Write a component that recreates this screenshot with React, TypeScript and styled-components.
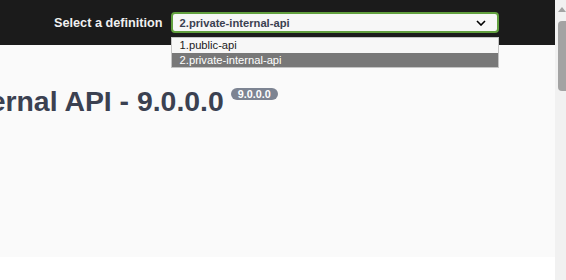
import React, { useState } from 'react';
import styled, { createGlobalStyle } from 'styled-components';

const GlobalStyle = createGlobalStyle`
  html, body {
    margin: 0;
    padding: 0;
    background: #ffffff;
    font-family: 'Liberation Sans', Arial, sans-serif;
    overflow: hidden;
  }
`;

const Frame = styled.div`
  display: flex;
  height: 280px;
  width: 566px;
`;

const Main = styled.div`
  flex: 1;
  display: flex;
  flex-direction: column;
  overflow: hidden;
  min-width: 0;
`;

const Topbar = styled.header`
  height: 45px;
  flex-shrink: 0;
  background: #1b1b1b;
  display: flex;
  align-items: center;
  padding-left: 54px;
  gap: 8px;
`;

const SelectLabel = styled.span`
  color: #f0f0f0;
  font-size: 12.7px;
  font-weight: 700;
  white-space: nowrap;
`;

const SelectWrap = styled.div`
  position: relative;
  width: 328px;
`;

const SelectBox = styled.div`
  box-sizing: border-box;
  height: 21px;
  border: 2px solid #62a03f;
  border-radius: 4px;
  background: #f7f7f7;
  display: flex;
  align-items: center;
  justify-content: space-between;
  padding: 0 11px 0 7px;
  font-size: 11.2px;
  font-weight: 700;
  color: #3b4151;
  cursor: pointer;
`;

const Options = styled.ul`
  position: absolute;
  top: 25px;
  left: 0;
  width: 328px;
  box-sizing: border-box;
  margin: 0;
  padding: 0;
  list-style: none;
  background: #f7f7f7;
  border: 1px solid #c4c4c4;
  z-index: 2;
`;

const Option = styled.li<{ $active?: boolean }>`
  height: 14.5px;
  line-height: 14px;
  padding-left: 8px;
  font-size: 11.2px;
  color: ${(p) => (p.$active ? '#ffffff' : '#1b1b1b')};
  background: ${(p) => (p.$active ? '#787878' : 'transparent')};
  white-space: nowrap;
`;

const Content = styled.section`
  height: 212px;
  flex-shrink: 0;
  background: #fafafa;
  overflow: hidden;
`;

const Title = styled.h2`
  margin: 40px 0 0 -45px;
  font-size: 28.4px;
  font-weight: 700;
  color: #3b4151;
  white-space: nowrap;
  line-height: normal;
`;

const VersionPill = styled.small`
  display: inline-block;
  margin-left: 7px;
  padding: 1px 7px 0;
  height: 11.5px;
  line-height: 11px;
  border-radius: 57px;
  background: #7d8492;
  color: #ffffff;
  font-size: 10.8px;
  font-weight: 700;
  vertical-align: top;
  position: relative;
  top: 3px;
  box-sizing: border-box;
`;

const Filler = styled.div`
  flex: 1;
  background: #ffffff;
`;

const Scrollbar = styled.div`
  width: 11px;
  flex-shrink: 0;
  background: #f1f1f1;
  display: flex;
  flex-direction: column;
  align-items: flex-start;
`;

const ArrowUp = styled.div`
  margin: 7px 0 0 3px;
  width: 0;
  height: 0;
  border-left: 4px solid transparent;
  border-right: 4px solid transparent;
  border-bottom: 5px solid #a3a3a3;
`;

const Thumb = styled.div`
  margin: 9px 0 0 3px;
  width: 8px;
  height: 70px;
  border-radius: 4px 0 0 4px;
  background: #a3a3a3;
`;

const definitions = ['1.public-api', '2.private-internal-api'];

const Chevron = () => (
  <svg width="10" height="6" viewBox="0 0 10 6" fill="none">
    <path d="M1 1 L5 5 L9 1" stroke="#000" strokeWidth="1.6" />
  </svg>
);

const App = () => {
  const [selected, setSelected] = useState(1);

  return (
    <>
      <GlobalStyle />
      <Frame>
        <Main>
          <Topbar>
            <SelectLabel>Select a definition</SelectLabel>
            <SelectWrap>
              <SelectBox>
                <span>{definitions[selected]}</span>
                <Chevron />
              </SelectBox>
              <Options>
                {definitions.map((d, i) => (
                  <Option
                    key={d}
                    $active={i === selected}
                    onClick={() => setSelected(i)}
                  >
                    {d}
                  </Option>
                ))}
              </Options>
            </SelectWrap>
          </Topbar>
          <Content>
            <Title>
              Internal API - 9.0.0.0
              <VersionPill>9.0.0.0</VersionPill>
            </Title>
          </Content>
          <Filler />
        </Main>
        <Scrollbar>
          <ArrowUp />
          <Thumb />
        </Scrollbar>
      </Frame>
    </>
  );
};

export default App;
